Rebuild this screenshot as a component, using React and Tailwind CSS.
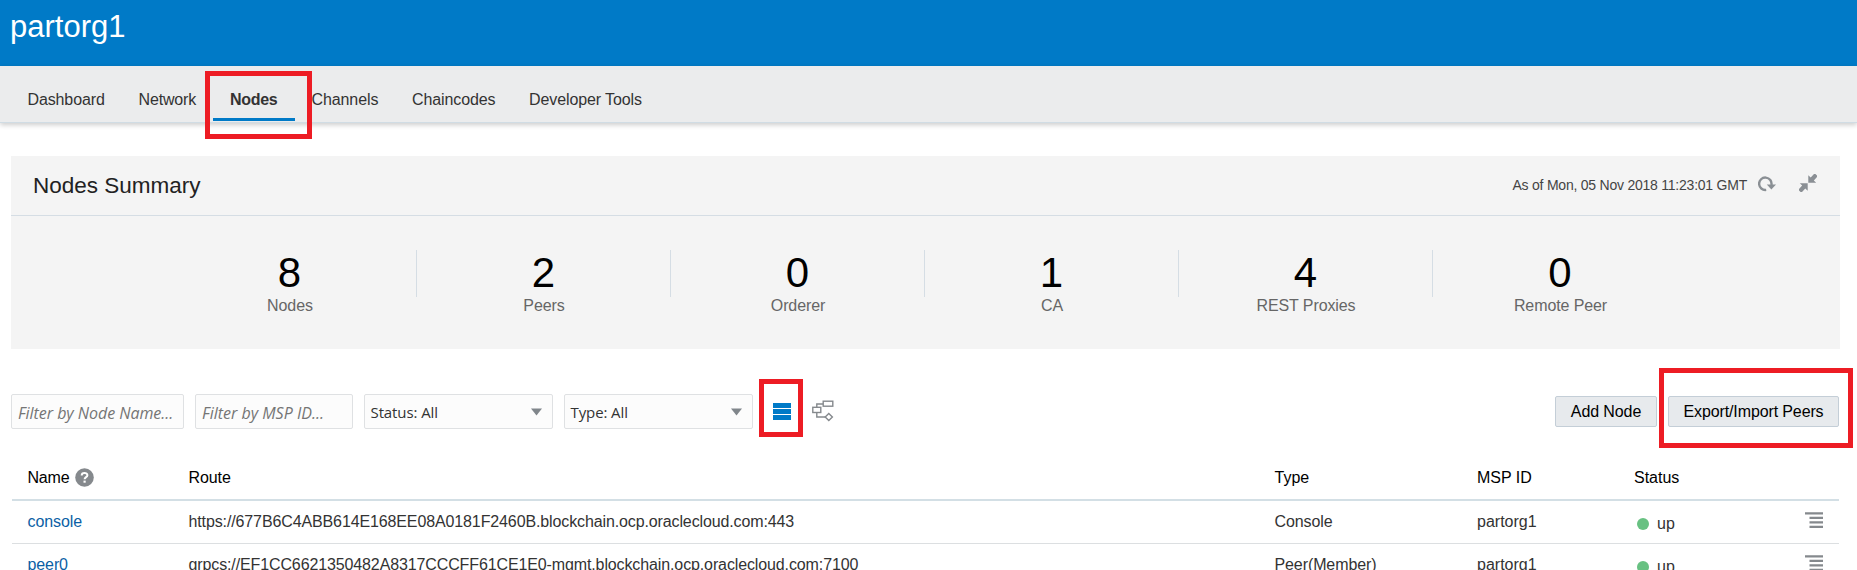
import React from "react";

const tabs = [
  { label: "Dashboard", cls: "ml-[27.5px] w-[111px] tracking-[-0.12px]" },
  { label: "Network", cls: "w-[74.5px] tracking-[-0.15px]" },
  { label: "Nodes", active: true },
  { label: "Channels", cls: "ml-[16.5px] w-[100.5px] tracking-[-0.1px]" },
  { label: "Chaincodes", cls: "w-[117px] tracking-[-0.1px]" },
  { label: "Developer Tools", cls: "tracking-[-0.1px]" },
];

const stats = [
  ["8", "Nodes"],
  ["2", "Peers"],
  ["0", "Orderer"],
  ["1", "CA"],
  ["4", "REST Proxies"],
  ["0", "Remote Peer"],
];

const rows = [
  {
    name: "console",
    route: "https://677B6C4ABB614E168EE08A0181F2460B.blockchain.ocp.oraclecloud.com:443",
    type: "Console",
  },
  {
    name: "peer0",
    route: "grpcs://EF1CC6621350482A8317CCCFF61CE1E0-mgmt.blockchain.ocp.oraclecloud.com:7100",
    type: "Peer(Member)",
  },
];

const Frame = ({ className }) => (
  <div className={`pointer-events-none absolute border-[5px] border-[#ed1c24] ${className}`} />
);

function Select({ children }) {
  return (
    <div className="mr-[11px] flex h-[35px] w-[189px] items-center justify-between rounded-[2px] border border-[#dfe1e3] bg-[#fcfcfc] pr-[10px] pl-[5.5px] font-['Open_Sans','Noto_Sans',sans-serif] text-[15px] tracking-[-0.1px] text-[#333]">
      <span className="pt-px">{children}</span>
      <svg width="11" height="8" viewBox="0 0 11 8">
        <path d="M0 0.5H11L5.5 7.5Z" fill="#80868b" />
      </svg>
    </div>
  );
}

const RefreshIcon = () => (
  <svg width="18" height="16" viewBox="0 0 18 16">
    <path d="M8.2 13.9A6.2 6.2 0 1 1 13.4 9" fill="none" stroke="#8a8f94" strokeWidth="2.4" />
    <path d="M8.8 8.6H18L13.4 13.6Z" fill="#8a8f94" />
  </svg>
);

const CollapseIcon = () => (
  <svg width="18" height="18" viewBox="0 0 18 18" fill="#8a8f94">
    <path d="M9.3 1.2V8.7H17.2L14.8 6.4L18 3V1.6L16.4 0H15L11.7 3.4Z" />
    <path d="M8.7 16.8V9.3H0.8L3.2 11.6L0 15V16.4L1.6 18H3L6.3 14.6Z" />
  </svg>
);

const MenuIcon = () => (
  <svg width="18" height="17" viewBox="0 0 18 17" fill="#85898d">
    <path d="M0 0.2H18V2.6H0ZM4.5 4.8H18V7H4.5ZM4.5 9.2H18V11.5H4.5ZM4.5 13.7H18V16H4.5Z" />
  </svg>
);

const HelpIcon = () => (
  <svg width="19" height="19" viewBox="0 0 19 19">
    <circle cx="9.5" cy="9.5" r="9.3" fill="#85898d" />
    <path d="M6.7 7.4C6.7 4.2 12.4 4.2 12.4 7.3C12.4 9.2 9.6 9.2 9.6 11.3" fill="none" stroke="#fff" strokeWidth="2" />
    <path d="M8.5 12.6H10.7V14.7H8.5Z" fill="#fff" />
  </svg>
);

const TopologyIcon = () => (
  <svg width="22" height="22" viewBox="0 0 22 22" fill="none" stroke="#85898d" strokeWidth="1.4">
    <rect x="11.2" y="1.2" width="9.6" height="5" />
    <rect x="0.8" y="7.3" width="8" height="5.2" />
    <path d="M4.8 7.3V4H11.2M4.8 12.5V17H13.2" />
    <path d="M16.8 13.4L20.4 17L16.8 20.6L13.2 17Z" />
  </svg>
);

export default function App() {
  return (
    <div className="relative h-[570px] w-[1857px] overflow-hidden bg-white font-['Liberation_Sans',Arial,sans-serif] text-base text-[#333]">
      <header className="h-[66px] bg-[#007ac7] pt-[9px] pl-[10px] text-[31px] leading-[36px] text-white">partorg1</header>

      <nav className="flex h-[57px] border-b border-[#d0dce4] bg-[#ebeced] leading-[20px] shadow-[0_2px_5px_rgba(0,0,0,0.2)]">
        {tabs.map((t) =>
          t.active ? (
            <div key={t.label} className="h-[55px] w-[82px] border-b-[3px] border-[#007ac7] pt-[24px] pl-[17px] font-bold tracking-[-0.3px]">
              {t.label}
            </div>
          ) : (
            <div key={t.label} className={`pt-[24px] whitespace-nowrap ${t.cls}`}>
              {t.label}
            </div>
          )
        )}
      </nav>

      <section className="mt-[33px] ml-[11px] h-[193px] w-[1829px] bg-[#f4f4f4]">
        <div className="flex h-[60px] items-center border-b border-[#d5dde4] pl-[22px]">
          <h2 className="flex-1 text-[22.5px] leading-[26px] text-[#222]">Nodes Summary</h2>
          <span className="mr-[11px] text-[14px] tracking-[-0.23px] text-[#444]">As of Mon, 05 Nov 2018 11:23:01 GMT</span>
          <div className="mr-[23px] mb-[4px]"><RefreshIcon /></div>
          <div className="mr-[23px] mb-[5px]"><CollapseIcon /></div>
        </div>
        <div className="flex pt-[34px] pl-[152px]">
          {stats.map(([n, label], i) => (
            <div key={label} className={`h-[47px] w-[254px] text-center ${i < 5 ? "border-r border-[#d5dde4]" : ""}`}>
              <div className="text-[42px] leading-[46px] text-black">{n}</div>
              <div className="pt-px pl-px leading-[18px] tracking-[-0.1px] text-[#666]">{label}</div>
            </div>
          ))}
        </div>
      </section>

      <div className="mt-[45px] ml-[11px] flex h-[35px] w-[1828px] items-center">
        <div className="mr-[11px] flex h-[35px] w-[173px] items-center rounded-[2px] border border-[#dfe1e3] bg-[#fcfcfc] pt-[3px] pl-[6px] font-['Open_Sans','Noto_Sans',sans-serif] text-[16px] whitespace-nowrap text-[#757575] italic tracking-[-0.04px]">
          <span>Filter by Node Name...</span>
        </div>
        <div className="mr-[11px] flex h-[35px] w-[158px] items-center rounded-[2px] border border-[#dfe1e3] bg-[#fcfcfc] pt-[3px] pl-[6px] font-['Open_Sans','Noto_Sans',sans-serif] text-[16px] whitespace-nowrap text-[#757575] italic">
          <span>Filter by MSP ID...</span>
        </div>
        <Select>Status: All</Select>
        <Select>Type: All</Select>
        <div className="ml-[9px] flex h-[18px] w-[18px] flex-col gap-px">
          <div className="h-[5px] bg-[#007ac7]" />
          <div className="h-[5px] bg-[#007ac7]" />
          <div className="h-[5px] bg-[#007ac7]" />
        </div>
        <div className="ml-[21px] pb-px"><TopologyIcon /></div>
        <div className="flex-1" />
        <button className="mr-[11px] h-[31px] w-[102px] rounded-[2px] border border-[#c4ced7] bg-[#e7eaed] tracking-[-0.1px] text-black">Add Node</button>
        <button className="h-[31px] w-[171px] rounded-[2px] border border-[#c4ced7] bg-[#e7eaed] tracking-[-0.12px] text-black">Export/Import Peers</button>
      </div>

      <div className="mt-[27px] ml-[12px] w-[1827px]">
        <div className="flex h-[45px] border-b-2 border-[#d3dfe5] pt-[12px] leading-[20px] text-black">
          <div className="flex w-[176.5px] gap-[6px] pl-[15.5px] tracking-[-0.2px]">Name <HelpIcon /></div>
          <div className="w-[1086px] tracking-[-0.1px]">Route</div>
          <div className="w-[202.5px]">Type</div>
          <div className="w-[157px]">MSP ID</div>
          <div>Status</div>
        </div>
        {rows.map((r) => (
          <div key={r.name} className="flex h-[43px] border-b border-[#dcdfe1] pt-[11px] leading-[20px]">
            <div className="w-[176.5px] pl-[15.5px] tracking-[-0.1px] text-[#0b5fa5]">{r.name}</div>
            <div className="w-[1086px] tracking-[-0.12px]">{r.route}</div>
            <div className="w-[202.5px] tracking-[-0.1px]">{r.type}</div>
            <div className="w-[157px]">partorg1</div>
            <div className="flex flex-1 pt-[2px]">
              <div className="mt-[4px] mr-[8px] ml-[3px] h-[12px] w-[12px] rounded-full bg-[#68c182]" />
              up
            </div>
            <div className="mr-[16px]"><MenuIcon /></div>
          </div>
        ))}
      </div>

      <Frame className="top-[71px] left-[205px] h-[68px] w-[107px]" />
      <Frame className="top-[379px] left-[759px] h-[58px] w-[44px]" />
      <Frame className="top-[368px] left-[1659px] h-[80px] w-[194px]" />
    </div>
  );
}
